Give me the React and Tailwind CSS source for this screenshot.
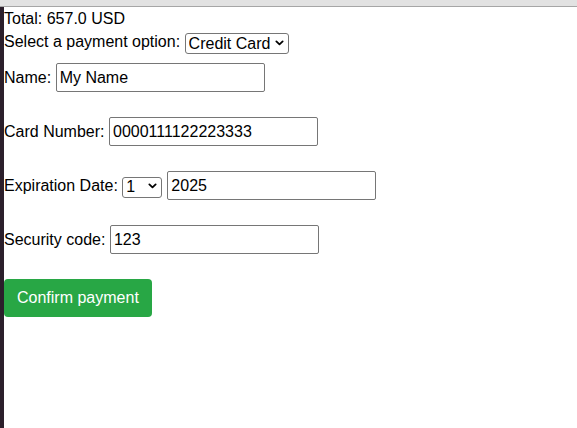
import { useState } from 'react'

function Chevron({ className }) {
    return (
        <svg className={className} viewBox="0 0 10 6" fill="none" stroke="currentColor" strokeWidth={2} strokeLinecap="round" strokeLinejoin="round">
            <path d="M1.5 1.2 5 4.5 8.5 1.2" />
        </svg>
    )
}

function Select({ value, onChange, options, className }) {
    return (
        <div className={`relative h-[21px] ${className}`}>
            <select
                value={value}
                onChange={e => onChange(e.target.value)}
                className="appearance-none w-full h-full border border-[#767676] rounded-[3px] bg-white pl-[3px] pr-[12px] text-base leading-[18px] text-black outline-none"
            >
                {options.map(o => <option key={o} value={o}>{o}</option>)}
            </select>
            <Chevron className="pointer-events-none absolute right-[5px] top-[8px] w-[9px] h-[6px] text-black" />
        </div>
    )
}

function Field({ label, children }) {
    return (
        <div className="flex items-center h-[29px]">
            <span className="mr-[4.5px] whitespace-nowrap">{label}</span>
            {children}
        </div>
    )
}

const inputCls = 'w-[209px] h-[29px] border border-[#767676] rounded-[2px] px-[3px] text-base text-black bg-white outline-none'

export default function App() {
    const [option, setOption] = useState('Credit Card')
    const [name, setName] = useState('My Name')
    const [card, setCard] = useState('0000111122223333')
    const [month, setMonth] = useState('1')
    const [year, setYear] = useState('2025')
    const [code, setCode] = useState('123')

    return (
        <div className="h-screen flex flex-col bg-white text-black text-base font-['Liberation_Sans',Arial,sans-serif]">
            <div className="h-[6px] bg-[#e2e2e2] border-b border-[#a6a6a6] box-content shrink-0" />
            <div className="flex flex-1">
                <div className="w-[4px] bg-[#2b1f2b] shrink-0" />
                <div className="flex flex-col pt-[3px]">
                    <div className="h-[18px] leading-[18px]">Total: 657.0 USD</div>
                    <div className="flex items-center h-[24px] mt-[2px]">
                        <span className="mr-[4.5px]">Select a payment option:</span>
                        <Select value={option} onChange={setOption} options={['Credit Card', 'PayPal']} className="w-[104px]" />
                    </div>
                    <div className="flex flex-col gap-[25px] mt-[9px]">
                        <Field label="Name:">
                            <input className={inputCls} value={name} onChange={e => setName(e.target.value)} />
                        </Field>
                        <Field label="Card Number:">
                            <input className={inputCls} value={card} onChange={e => setCard(e.target.value)} />
                        </Field>
                        <Field label="Expiration Date:">
                            <Select value={month} onChange={setMonth} options={['1', '2', '3', '4', '5', '6', '7', '8', '9', '10', '11', '12']} className="w-[40px] mr-[5px]" />
                            <input className={inputCls} value={year} onChange={e => setYear(e.target.value)} />
                        </Field>
                        <Field label="Security code:">
                            <input className={inputCls} value={code} onChange={e => setCode(e.target.value)} />
                        </Field>
                        <div>
                            <button className="h-[38px] px-[13px] rounded-[4px] bg-[#28a745] text-white text-base leading-6">Confirm payment</button>
                        </div>
                    </div>
                </div>
            </div>
        </div>
    )
}
